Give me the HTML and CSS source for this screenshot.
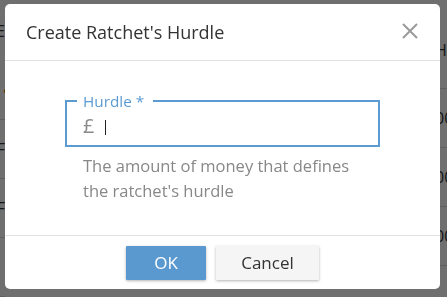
FILE: index.html
```html
<!DOCTYPE html>
<html>
<head>
<meta charset="utf-8">
<link rel="stylesheet" href="styles.css">
</head>
<body>
<div class="page">
  <div class="col col-left">
    <div class="row r-top"><span>E</span></div>
    <div class="row"><span class="dot">&#9679;</span></div>
    <div class="row"><span>F</span></div>
    <div class="row"><span>F</span></div>
    <div class="row"><span></span></div>
  </div>
  <div class="col col-mid"></div>
  <div class="col col-right">
    <div class="row r-head"><span>H</span></div>
    <div class="row"><span>00</span></div>
    <div class="row"><span>00</span></div>
    <div class="row"><span>00</span></div>
    <div class="row"><span></span></div>
  </div>
</div>
<div class="overlay"></div>
<div class="dialog">
  <div class="dialog-header">
    <h1 class="dialog-title">Create Ratchet's Hurdle</h1>
    <button class="close" aria-label="Close">
      <svg width="16" height="16" viewBox="0 0 16 16"><path d="M1 1 L15 15 M15 1 L1 15" stroke="#9a9a9a" stroke-width="2" fill="none"/></svg>
    </button>
  </div>
  <div class="dialog-body">
    <fieldset class="field">
      <legend class="field-label">Hurdle *</legend>
      <div class="field-input">
        <span class="currency">£</span>
        <span class="caret"></span>
      </div>
    </fieldset>
    <p class="help">The amount of money that defines<br>the ratchet's hurdle</p>
  </div>
  <div class="dialog-footer">
    <button class="btn btn-primary">OK</button>
    <button class="btn btn-default">Cancel</button>
  </div>
</div>
</body>
</html>
```
FILE: styles.css
```css
html, body {
  margin: 0;
  padding: 0;
}
body {
  width: 447px;
  height: 297px;
  overflow: hidden;
  background: #fff;
  font-family: "Open Sans", "Noto Sans", sans-serif;
}
.page {
  display: flex;
  height: 297px;
}
.col {
  display: flex;
  flex-direction: column;
  overflow: hidden;
}
.col-left { width: 5px; }
.col-mid { flex: 1; }
.col-right { width: 10px; }
.row {
  height: 58px;
  flex: none;
  display: flex;
  align-items: center;
  border-bottom: 1px solid #d8d8d8;
  font-size: 16px;
  color: #333;
  white-space: nowrap;
}
.col-left .row { justify-content: flex-end; }
.col-left .r-top { height: 61px; border-bottom: none; }
.col-right .r-head { height: 89px; padding-top: 12px; box-sizing: border-box; }
.col-right .row span { margin-left: -2px; }
.dot { color: #e07a10; font-size: 10px; margin-right: -4px; }

.overlay {
  position: fixed;
  inset: 0;
  background: rgba(0, 0, 0, 0.565);
}

.dialog {
  position: fixed;
  left: 5px;
  top: 4px;
  width: 435px;
  height: 285px;
  background: #fff;
  border-radius: 5px;
  display: flex;
  flex-direction: column;
  overflow: hidden;
}
.dialog-header {
  height: 56px;
  flex: none;
  display: flex;
  align-items: center;
  justify-content: space-between;
  padding: 0 21px 0 21px;
  border-bottom: 1px solid #e2e2e2;
}
.dialog-title {
  margin: 0;
  font-size: 18px;
  font-weight: 400;
  color: #333;
}
.close {
  border: 0;
  background: none;
  padding: 0;
  width: 16px;
  height: 16px;
  margin-right: 1px;
  margin-top: -2px;
  display: flex;
}
.dialog-body {
  flex: 1;
  padding: 31px 60px 0 60px;
}
.field {
  margin: 0;
  width: 315px;
  box-sizing: border-box;
  border: 2px solid #5b9bd1;
  padding: 0 0 0 10px;
  min-width: 0;
}
.field-label {
  padding: 0 9px 0 6px;
  font-size: 15.3px;
  line-height: 18px;
  color: #5b9bd1;
}
.field-input {
  height: 35px;
  display: flex;
  align-items: center;
  padding-left: 6px;
}
.currency {
  font-size: 20px;
  color: #8a8a8a;
  line-height: 24px;
  margin-top: -4px;
}
.caret {
  width: 1px;
  height: 15px;
  background: #222;
  margin-left: 11px;
}
.help {
  margin: 6px 0 0 18px;
  font-size: 16.5px;
  line-height: 25px;
  color: #888;
}
.dialog-footer {
  height: 53px;
  flex: none;
  border-top: 1px solid #e2e2e2;
  display: flex;
  justify-content: center;
  align-items: center;
  gap: 10px;
}
.btn {
  height: 34px;
  border: 0;
  border-radius: 1px;
  font-family: inherit;
  font-size: 17px;
  box-shadow: 0 1px 3px rgba(0, 0, 0, 0.3);
  padding: 0;
}
.btn-primary {
  width: 80px;
  background: #5a99d0;
  color: #fff;
}
.btn-default {
  width: 103px;
  background: #f5f5f5;
  color: #333;
}
```
